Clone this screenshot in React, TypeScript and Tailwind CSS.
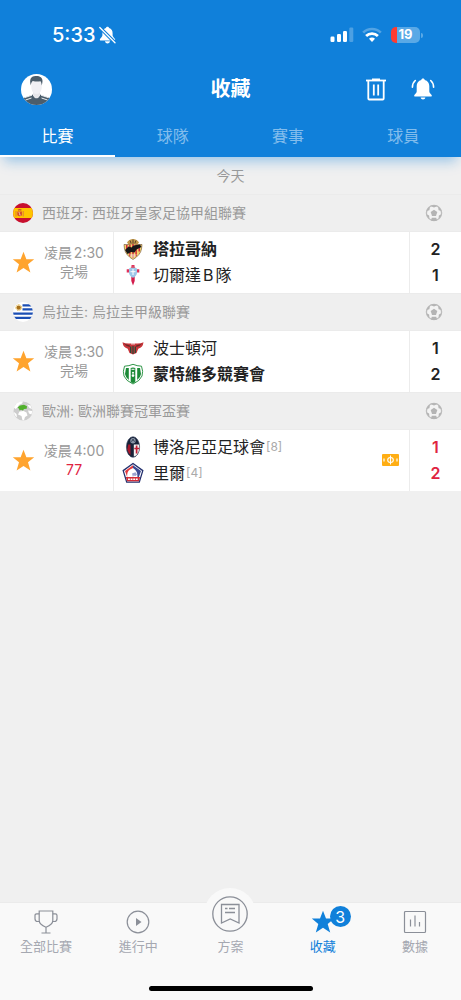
import { useState, type ReactNode } from "react"

type Team = {
  name: string
  crest: ReactNode
  score: number
  seed?: number
  winner?: boolean
}

type Match = {
  id: string
  country: string
  league: string
  flag: ReactNode
  time: string
  status: string
  live?: boolean
  teams: Team[]
}

function BellOffIcon() {
  return (
    <svg viewBox="0 0 17 18" className="h-[18px] w-[17px]" aria-hidden="true">
      <path d="M8.500.8C7.600.8 7 1.400 6.900 2 4.500 2.800 3.400 4.500 3.400 7.200v2.300c0 1.500-2.600 2.800-2.600 4.300 0 .4.200.6.600.6h14.200c.4 0 .6-.2.600-.6 0-1.500-2.600-2.800-2.600-4.300V7.200c0-2.700-1.100-4.400-3.500-5.200-.1-.6-.7-1.200-1.600-1.200z" fill="#fff" />
      <path d="M6 15.300h5c-.2 1.300-1.200 2.100-2.500 2.100S6.200 16.600 6 15.300z" fill="#fff" />
      <path d="M.8 1.500 16 16.700" stroke="#1080da" strokeWidth="3.400" />
      <path d="M.8 1.500 16 16.700" stroke="#fff" strokeWidth="1.300" strokeLinecap="round" />
    </svg>
  )
}

function SignalIcon() {
  return (
    <svg viewBox="0 0 24 16" className="h-4 w-6" aria-hidden="true">
      <rect x="0.500" y="9.500" width="4" height="5.500" rx="1.200" fill="#fff" />
      <rect x="7" y="7" width="4" height="8" rx="1.200" fill="#fff" />
      <rect x="13" y="4" width="4" height="11" rx="1.200" fill="#fff" />
      <rect x="19.300" y="0.500" width="4" height="14.500" rx="1.200" fill="#fff" opacity="0.250" />
    </svg>
  )
}

function WifiIcon() {
  return (
    <svg viewBox="0 0 20 16" className="h-4 w-5" fill="none" aria-hidden="true">
      <path d="M1.200 5.600a12.500 12.500 0 0 1 17.600 0" stroke="#fff" strokeOpacity="0.280" strokeWidth="2.700" />
      <path d="M4.100 9a8.300 8.300 0 0 1 11.800 0" stroke="#fff" strokeWidth="2.700" />
      <path d="M10 10.600c1.200 0 2.200.4 3 1.200L10 15 7 11.800c.8-.8 1.800-1.200 3-1.200z" fill="#fff" />
    </svg>
  )
}

function Avatar() {
  return (
    <svg viewBox="0 0 31 31" className="size-[31px] rounded-full" aria-hidden="true">
      <rect width="31" height="31" fill="#fff" />
      <path d="M2 24.500c3-2 7-2.500 10-4h7c3 1.500 7 2 10 4V31H2z" fill="#4b5d6b" />
      <path d="M4 23.500l7-2.300M4.500 26l6-2M27 23.500l-7-2.300M26.500 26l-6-2" stroke="#fff" strokeWidth="0.900" />
      <path d="M12 17h7v4.500c-1 2-2.200 2.800-3.500 2.800S13 23.500 12 21.500z" fill="#e6e6ea" />
      <path d="M10.300 7.500h10.500V13c0 3.800-2.300 7-5.200 7s-5.300-3.200-5.300-7z" fill="#f0f0f4" />
      <path d="M9.800 11.500C8.300 6 9.500 3 13 2.300c4-1 8.700.2 8.500 5-.1 1.700-.4 3-.8 4.200-.1-2-.5-3.500-1.200-4.300-2.500.6-5.300.4-7.700-.2-1.200.9-1.800 2.300-2 4.500z" fill="#4b5d6b" />
    </svg>
  )
}

function TrashIcon() {
  return (
    <svg viewBox="0 0 22 23" className="h-[23px] w-[22px]" fill="none" stroke="#fff" aria-hidden="true">
      <path d="M1 2.500h20" strokeWidth="1.800" />
      <path d="M7 1.300h8" strokeWidth="1.600" />
      <path d="M3.300 3v17.500q0 1 1 1h13.400q1 0 1-1V3" strokeWidth="1.800" />
      <path d="M8.800 6.500v11M13.200 6.500v11" strokeWidth="1.800" />
    </svg>
  )
}

function BellIcon() {
  return (
    <svg viewBox="0 0 24 22" className="h-[22px] w-6" aria-hidden="true">
      <path d="M12 .6c-1 0-1.600.6-1.700 1.300C7.300 2.600 5.700 4.900 5.700 8v5.500c0 1.700-2.400 2.700-2.600 4.200 0 .5.200.7.700.7h16.400c.5 0 .7-.2.700-.7-.2-1.500-2.600-2.500-2.600-4.200V8c0-3.100-1.600-5.400-4.600-6.100C13.600 1.200 13 .6 12 .6z" fill="#fff" />
      <path d="M9.600 19.400h4.800c-.2 1.200-1.200 2-2.400 2s-2.200-.8-2.400-2z" fill="#fff" />
      <path d="M4.300 2.500C2.300 4.300 1.400 6.600 1.400 9.200M19.700 2.500c2 1.800 2.900 4.100 2.900 6.700" fill="none" stroke="#fff" strokeWidth="1.600" strokeLinecap="round" />
    </svg>
  )
}

function StarIcon({ className }: { className: string }) {
  return (
    <svg viewBox="0 0 24 24" className={className} fill="currentColor" aria-hidden="true">
      <path d="M12 .8l3 7.800h8.200l-6.500 5.300L19.200 22.500 12 17.700 4.800 22.500 7.300 13.900.8 8.600H9z" />
    </svg>
  )
}

function BallIcon() {
  return (
    <svg viewBox="0 0 18 18" className="size-[18px] shrink-0" aria-hidden="true">
      <circle cx="9" cy="9" r="7.600" fill="#f3f3f3" stroke="#bdbdbd" strokeWidth="1.300" />
      <path d="M9 5.700l3.300 2.400-1.300 3.900H7L5.700 8.100z" fill="#b4b4b4" />
      <path d="M5.500 1.900 9 3.400l3.500-1.500Q9 .5 5.500 1.900zM1.400 7l3-.8.600-3.400Q2.300 4 1.400 7zM16.600 7l-3-.8-.6-3.400Q15.700 4 16.600 7zM1.400 10.200l2.700 1.200.4 3.400Q2 13.200 1.400 10.200zM16.600 10.200l-2.700 1.200-.4 3.400q2.500-1.600 3.100-4.600zM5.900 16.400l.9-2.600h4.400l.9 2.600q-3.100 1.200-6.200 0z" fill="#b4b4b4" />
    </svg>
  )
}

function SpainFlag() {
  return (
    <svg viewBox="0 0 20 20" className="size-5 rounded-full">
      <rect width="20" height="20" fill="#c8102e" />
      <rect y="5" width="20" height="10" fill="#ffc400" />
      <path d="M4.300 8.500h4.700v3.700q-2.300 2-4.700 0z" fill="#d4512c" />
      <path d="M3 8v5.500M10.200 8v5.500" stroke="#e07a3a" strokeWidth="1" />
      <path d="M5 7.200q1.700-1.200 3.400 0" fill="none" stroke="#c8502c" strokeWidth="1.400" />
      <path d="M5.500 9.500h1v2.500h1.500" fill="none" stroke="#f6c9b0" strokeWidth="0.700" />
    </svg>
  )
}

function UruguayFlag() {
  return (
    <svg viewBox="0 0 20 20" className="size-5 rounded-full">
      <rect width="20" height="20" fill="#fff" />
      <path d="M9.500 3.300H20M9.500 7.400H20M0 11.600h20M0 15.900h20" stroke="#1c4fb4" strokeWidth="2.200" />
      <circle cx="5.700" cy="5.600" r="2.200" fill="#a9711a" />
      <circle cx="5.700" cy="5.600" r="2.800" fill="none" stroke="#d9a21b" strokeWidth="1" strokeDasharray="1 0.700" />
    </svg>
  )
}

function GlobeIcon() {
  return (
    <svg viewBox="0 0 20 20" className="size-5">
      <circle cx="10" cy="10" r="9.500" fill="#cdcdcd" />
      <path d="M1 6.500C3 2 6.500.500 10 .600L9 2.500 6 4 4.500 6.500 2.500 8zM6.500 10.500l4-.5 3 1.500 1 3-2.500 1.500-1 3.200H9.500L8.500 15 5 13.500zM14 3.500l3.500 1L19 8l-2.500-1zM15 9.500l4.300.5-.8 3.500-2.500-1zM1 11l2.500 2 .5 3.500C2 15 1 13 1 11z" fill="#fff" />
      <path d="M4.500 6.500l2.500-2 4-.7 3 1.400-.3 2.500-2.700.3-1 1.500-2-.7-1.500.6-.5-1.600z" fill="#50b02c" />
    </svg>
  )
}

function TarragonaCrest() {
  return (
    <svg viewBox="0 0 22 22" className="size-[22px]">
      <path d="M5 4.500Q7 1.200 11 1q4 .2 6 3.500l-1.500 2h-9z" fill="#c49a4a" />
      <path d="M8 2.500l1 2.500M11 1.500V5M14 2.500L13 5" stroke="#59402a" strokeWidth="1" />
      <path d="M2 6.500Q7 7 11 5.500q4 1.500 9 1l-.5 4.500q-1 6-8.500 10.500Q3.500 17 2.500 11z" fill="#f4d46a" stroke="#6b4a32" strokeWidth="0.600" />
      <path d="M4.800 7v6.500M7.900 6.700v11.500M11 6v14M14.100 6.700v11.500M17.200 7v6.500" stroke="#cf2638" strokeWidth="1.500" />
      <path d="M3 12l3.500-3.500 3 1 2-2 6.500-1 1.500 2.500-5 2.500-2 3-3.500-.5-3.500 2z" fill="#171717" />
      <path d="M7 16.500q4-.8 8 0L11 20.500z" fill="#f1e6d8" opacity="0.600" />
    </svg>
  )
}

function CeltaCrest() {
  return (
    <svg viewBox="0 0 22 22" className="size-[22px]">
      <path d="M9.300 11h3.400v6L11 21.500 9.300 17z" fill="#d31c4c" />
      <path d="M9.500 1h3v3h-3zM4.700 5.200h3v3.300h-3zM14.300 5.200h3v3.300h-3z" fill="#e0305a" />
      <path d="M7 4.500q4-2 8 0v4.200q-.5 3.500-4 5-3.500-1.500-4-5z" fill="#9cc6e8" />
      <path d="M8.500 3.700Q11 1 13.500 3.700z" fill="#d4566e" />
      <path d="M11 5v6M8.500 7.700h5" stroke="#fff" strokeWidth="1" />
    </svg>
  )
}

function BostonRiverCrest() {
  return (
    <svg viewBox="0 0 22 22" className="size-[22px]">
      <path d="M.5 5.300Q5 7.500 11 6q6 1.500 10.500-.7Q21 10.300 16.300 11.800L14.500 16 11 17.500 7.500 16 5.700 11.800Q1 10.300.5 5.300z" fill="#c7353a" />
      <path d="M2 6.500q3.500 1.800 5.500 1.400l.5 2Q4 9.500 2 6.500zM20 6.500q-3.500 1.800-5.500 1.400l-.5 2q4-.4 6-3.400z" fill="#6b2b28" />
      <path d="M8.700 9.500v6.500M11 9v8M13.300 9.500v6.500" stroke="#1f4b36" strokeWidth="1.200" />
      <path d="M9 6h4v1.500H9z" fill="#f0c7c7" />
    </svg>
  )
}

function RacingCrest() {
  return (
    <svg viewBox="0 0 22 22" className="size-[22px]">
      <path d="M11 1.300q4 1.700 8.500 1.900 2 5.300.5 9.800-1.700 4.700-9 8-7.300-3.300-9-8-1.500-4.500.5-9.800Q7 3 11 1.300z" fill="#fff" stroke="#1b8a36" strokeWidth="0.900" />
      <path d="M4 5h2.800v12Q3.500 14.500 3 11zM18 5h-2.800v12q3.300-2.500 3.800-6z" fill="#1b8a36" />
      <path d="M8.700 5q2.300-1 4.600 0v14.300q-2.300 1.200-4.600 0z" fill="#1b8a36" />
      <circle cx="11" cy="12.600" r="1.300" fill="#fff" />
      <circle cx="11" cy="9.700" r="1" fill="#fff" />
      <path d="M9.500 6.300h3" stroke="#fff" strokeWidth="1" />
    </svg>
  )
}

function BolognaCrest() {
  return (
    <svg viewBox="0 0 22 22" className="size-[22px]">
      <ellipse cx="11" cy="11" rx="6.600" ry="10.300" fill="#182238" stroke="#33405c" strokeWidth="0.600" />
      <path d="M6.200 8.500h2.300v10.500Q6.200 17 5.300 13.500z" fill="#a8172c" />
      <path d="M11.800 8.500H17q1 4-.5 7.500-1.500 3.300-3.500 4.300l-1.200.3z" fill="#f4f4f4" />
      <path d="M12.300 12.500h5M14.600 9.500v8" stroke="#c21e36" strokeWidth="1.700" />
      <circle cx="11" cy="4.700" r="2.700" fill="#8a96a8" />
      <path d="M9.500 5.700 11 3.200l1.500 2.500" fill="none" stroke="#182238" strokeWidth="0.800" />
    </svg>
  )
}

function LilleCrest() {
  return (
    <svg viewBox="0 0 22 22" className="size-[22px]">
      <path d="M11 1.500l9.800 7.100-3.500 11.600H4.700L1.200 8.600z" fill="#fff" stroke="#23306e" strokeWidth="1.300" />
      <path d="M11 3.300L3 9l2.300 6.500Q4.500 9.500 8 7.500L11 6z" fill="#e23b3f" />
      <path d="M11 3.300L19 9l-2.300 6.500h-1.200Q16 9 11 6z" fill="#3b4a93" />
      <path d="M10 11.500l3.500-1.200 1.500 2.200-1.500 1.500-2-.5-.5 2z" fill="#9aa3cf" />
      <path d="M3.800 15h14.400l-1.300 4.300H5.100z" fill="#d32c38" />
      <path d="M6 17.200h10" stroke="#fff" strokeWidth="1.500" strokeDasharray="1.900 0.700" />
    </svg>
  )
}

function PitchBadge() {
  return (
    <svg viewBox="0 0 17 12" className="h-3 w-[17px] shrink-0" role="img" aria-label="直播">
      <rect width="17" height="12" rx="1" fill="#ffae14" />
      <ellipse cx="8.500" cy="6" rx="2.800" ry="2.500" fill="none" stroke="#fff" strokeWidth="1.100" />
      <path d="M8.500 1.500v9" stroke="#fff" strokeWidth="1.100" />
      <path d="M2 4.500v3M15 4.500v3" stroke="#fff" strokeWidth="1.200" />
    </svg>
  )
}

function TrophyIcon() {
  return (
    <svg viewBox="0 0 24 24" className="size-6" fill="none" stroke="currentColor" strokeWidth="1.200" aria-hidden="true">
      <path d="M5.200 1h13.600v9.500c0 3.500-3 5.200-6.800 6.700-3.800-1.500-6.800-3.200-6.800-6.700z" />
      <path d="M5.200 3.800H2.700q-1.700 0-1.700 1.700v3.200q0 2.800 2.800 2.800h1.400M18.800 3.800h2.500q1.700 0 1.700 1.700v3.200q0 2.800-2.800 2.800h-1.400M12 17.200V23M7.500 23h9" />
    </svg>
  )
}

function PlayIcon() {
  return (
    <svg viewBox="0 0 24 24" className="size-6" aria-hidden="true">
      <circle cx="12" cy="12" r="10.800" fill="none" stroke="currentColor" strokeWidth="1.200" />
      <path d="M10 8l5.500 4-5.500 4z" fill="currentColor" />
    </svg>
  )
}

function PlanIcon() {
  return (
    <svg viewBox="0 0 36 36" className="size-9" fill="none" stroke="currentColor" strokeWidth="1.300" aria-hidden="true">
      <circle cx="18" cy="18" r="17.200" />
      <path d="M9.500 8.500h17.500v18.500L18.200 23 9.500 27z" />
      <path d="M13 12.500h2.500M17 12.500h6M13 16.500h10" />
    </svg>
  )
}

function StatsIcon() {
  return (
    <svg viewBox="0 0 24 24" className="size-6" fill="none" stroke="currentColor" strokeWidth="1.200" aria-hidden="true">
      <rect x="1.500" y="1.500" width="21" height="21" rx="1" />
      <path d="M7.500 9.500v7M12 5.500v11M16.500 12v4.500" />
    </svg>
  )
}

const tabs = ["比賽", "球隊", "賽事", "球員"]

const matches: Match[] = [
  {
    id: "esp",
    country: "西班牙",
    league: "西班牙皇家足協甲組聯賽",
    flag: <SpainFlag />,
    time: "凌晨2:30",
    status: "完場",
    teams: [
      { name: "塔拉哥納", crest: <TarragonaCrest />, score: 2, winner: true },
      { name: "切爾達B隊", crest: <CeltaCrest />, score: 1 },
    ],
  },
  {
    id: "uru",
    country: "烏拉圭",
    league: "烏拉圭甲級聯賽",
    flag: <UruguayFlag />,
    time: "凌晨3:30",
    status: "完場",
    teams: [
      { name: "波士頓河", crest: <BostonRiverCrest />, score: 1 },
      { name: "蒙特維多競賽會", crest: <RacingCrest />, score: 2, winner: true },
    ],
  },
  {
    id: "eur",
    country: "歐洲",
    league: "歐洲聯賽冠軍盃賽",
    flag: <GlobeIcon />,
    time: "凌晨4:00",
    status: "77",
    live: true,
    teams: [
      { name: "博洛尼亞足球會", crest: <BolognaCrest />, score: 1, seed: 8 },
      { name: "里爾", crest: <LilleCrest />, score: 2, seed: 4 },
    ],
  },
]

function MatchSection({ match }: { match: Match }) {
  return (
    <section>
      <h2 className="flex h-[38px] items-center border-y border-[#ebebeb] bg-[#efefef] pr-[18px] pl-[13px] text-sm font-normal text-[#999]">
        <span className="mr-[9px]">{match.flag}</span>
        <span className="flex-1">
          {match.country}: {match.league}
        </span>
        <BallIcon />
      </h2>
      <div className="flex h-[61px] bg-white">
        <div className="flex w-[114px] shrink-0 items-center border-r border-[#ececec] pl-3">
          <button type="button" aria-label="取消收藏" className="text-[#ffa42e]">
            <StarIcon className="size-[23px]" />
          </button>
          <div className="flex-1 pb-0.5 text-center text-sm leading-[19px] text-[#999]">
            <p className="whitespace-nowrap">{match.time}</p>
            <p className={match.live ? "text-[#e0243f]" : ""}>{match.status}</p>
          </div>
        </div>
        <div className="flex flex-1 items-center pr-[10px] pb-px pl-2">
          <ul className="flex-1">
            {match.teams.map((team) => (
              <li key={team.name} className="flex h-[26px] items-center text-base text-[#222]">
                <span className="mr-[9px]">{team.crest}</span>
                <span className={team.winner ? "font-bold" : ""}>{team.name}</span>
                {team.seed && <span className="ml-px text-xs text-[#aaa]">[{team.seed}]</span>}
              </li>
            ))}
          </ul>
          {match.live && <PitchBadge />}
        </div>
        <div className="flex w-[52px] shrink-0 flex-col items-center justify-center border-l border-[#ececec] pb-px">
          {match.teams.map((team) => (
            <span
              key={team.name}
              className={`h-[26px] text-base leading-[26px] font-semibold ${match.live ? "text-[#e0243f]" : "text-[#222]"}`}
            >
              {team.score}
            </span>
          ))}
        </div>
      </div>
    </section>
  )
}

export default function App() {
  const [activeTab, setActiveTab] = useState("比賽")

  return (
    <div className="flex min-h-screen flex-col bg-[#f0f0f0] font-['Inter','Noto_Sans_CJK_TC',sans-serif] [text-autospace:normal]">
      <header className="relative z-10 bg-[#1080da] text-white shadow-[0_8px_12px_-4px_rgba(16,128,218,0.4)]">
        <div className="flex h-[70px] items-center pr-[38px] pl-[52px]">
          <span className="text-xl font-medium">5:33</span>
          <span className="ml-[3px] flex-1">
            <BellOffIcon />
          </span>
          <SignalIcon />
          <span className="mr-[9px] ml-2">
            <WifiIcon />
          </span>
          <span className="flex h-4 w-[29px] items-center justify-center rounded-[5px] bg-linear-to-r from-[#ff3b30] from-20% to-[#5aa9e6] to-20% text-[13px] font-bold">
            19
          </span>
          <span className="ml-px h-[5px] w-0.5 rounded-r bg-[#5aa9e6]" />
        </div>

        <div className="grid h-[38px] grid-cols-[1fr_auto_1fr] items-center px-[21px]">
          <button type="button" aria-label="個人檔案" className="justify-self-start">
            <Avatar />
          </button>
          <h1 className="text-xl font-bold">收藏</h1>
          <div className="flex items-center justify-end gap-6 pr-[5px]">
            <button type="button" aria-label="刪除">
              <TrashIcon />
            </button>
            <button type="button" aria-label="通知">
              <BellIcon />
            </button>
          </div>
        </div>

        <nav className="grid h-[49px] grid-cols-4 pt-2">
          {tabs.map((tab) => (
            <button
              key={tab}
              type="button"
              onClick={() => setActiveTab(tab)}
              className={`border-b-2 text-base ${activeTab === tab ? "border-white text-white" : "border-transparent text-[#83bdec]"}`}
            >
              {tab}
            </button>
          ))}
        </nav>
      </header>

      <main className="flex-1">
        <p className="flex h-[37px] items-center justify-center text-sm text-[#999]">今天</p>
        {matches.map((match) => (
          <MatchSection key={match.id} match={match} />
        ))}
      </main>

      <footer className="border-t border-[#ebebeb] bg-[#f9f9f9]">
        <nav className="grid h-[83px] grid-cols-5 pt-[7px] text-[13px] leading-5 text-[#a5a8b1]">
          <a href="#all" className="flex flex-col items-center gap-0.5">
            <span className="text-[#8b8f98]">
              <TrophyIcon />
            </span>
            全部比賽
          </a>
          <a href="#live" className="flex flex-col items-center gap-0.5">
            <span className="text-[#8b8f98]">
              <PlayIcon />
            </span>
            進行中
          </a>
          <a href="#plans" className="relative flex flex-col items-center pt-[26px]">
            <span className="absolute -top-[22px] flex size-[52px] items-center justify-center rounded-full bg-[#f9f9f9] text-[#8b8f98]">
              <PlanIcon />
            </span>
            <span className="relative">方案</span>
          </a>
          <a href="#favorites" className="flex flex-col items-center gap-0.5 text-[#1080da]">
            <span className="relative">
              <StarIcon className="size-6" />
              <span className="absolute -top-1 left-[19px] flex size-[21px] items-center justify-center rounded-full bg-[#1080da] text-base text-white">
                3
              </span>
            </span>
            收藏
          </a>
          <a href="#stats" className="flex flex-col items-center gap-0.5">
            <span className="text-[#8b8f98]">
              <StatsIcon />
            </span>
            數據
          </a>
        </nav>
        <div className="mx-auto mb-[9px] h-[5px] w-41 rounded-full bg-black" />
      </footer>
    </div>
  )
}
